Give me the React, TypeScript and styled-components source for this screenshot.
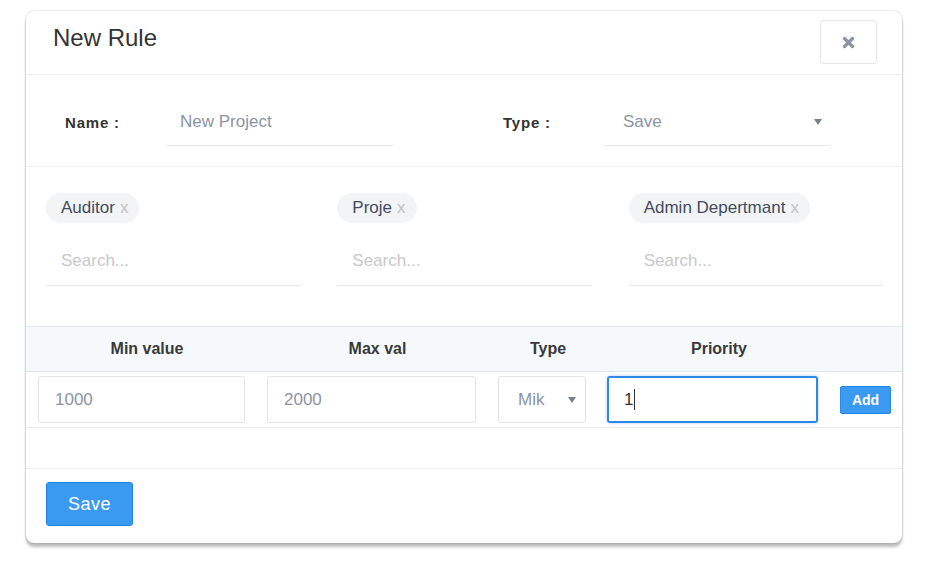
import React from 'react';
import styled, { createGlobalStyle } from 'styled-components';

const GlobalStyle = createGlobalStyle`
  html, body {
    margin: 0;
    padding: 0;
    background: #fff;
  }
  body {
    font-family: "Liberation Sans", Arial, sans-serif;
    color: #333;
  }
  * {
    box-sizing: border-box;
  }
`;

const Page = styled.div`
  padding: 11px 24px 20px 26px;
`;

const Card = styled.div`
  width: 876px;
  background: #fff;
  border-radius: 8px;
  box-shadow: 0 0 2px rgba(0, 0, 0, 0.25), 0 4px 3px rgba(0, 0, 0, 0.26);
`;

const Header = styled.div`
  display: flex;
  justify-content: space-between;
  align-items: flex-start;
  height: 64px;
  padding: 9px 25px 0 27px;
  border-bottom: 1px solid #f0f0f0;
`;

const Title = styled.h4`
  margin: 3px 0 0;
  font-size: 24px;
  line-height: 29px;
  font-weight: normal;
  color: #333;
`;

const CloseButton = styled.button`
  width: 57px;
  height: 44px;
  display: flex;
  align-items: center;
  justify-content: center;
  background: #fff;
  border: 1px solid #e6e6e6;
  border-radius: 3px;
  padding: 0;
  cursor: pointer;
`;

const FieldRow = styled.div`
  display: grid;
  grid-template-columns: 101px 227px 110px 100px 227px;
  align-items: center;
  padding: 23px 0 20px 39px;
  border-bottom: 1px solid #f0f0f0;
`;

const Label = styled.label`
  font-size: 15px;
  font-weight: bold;
  letter-spacing: 0.8px;
  color: #333;
`;

const LineInput = styled.input`
  width: 100%;
  height: 48px;
  border: none;
  border-bottom: 1px solid #e8e8e8;
  padding: 0 14px;
  font-family: "Liberation Sans", Arial, sans-serif;
  font-size: 17px;
  color: #8a94a6;
  background: transparent;
  outline: none;
`;

const LineSelect = styled.div`
  height: 48px;
  display: flex;
  align-items: center;
  justify-content: space-between;
  border-bottom: 1px solid #e8e8e8;
  padding: 0 8px 0 20px;
  font-size: 17px;
  color: #8a94a6;
`;

const TagsRow = styled.div`
  display: grid;
  grid-template-columns: repeat(3, 1fr);
  column-gap: 37px;
  padding: 26px 19px 40px 20px;
`;

const TagColumn = styled.div`
  display: flex;
  flex-direction: column;
  align-items: flex-start;
`;

const Tag = styled.span`
  display: inline-flex;
  align-items: center;
  height: 30px;
  padding: 0 11px 0 15px;
  border-radius: 15px;
  background: #f2f4f5;
  font-size: 17px;
  color: #434c63;
`;

const TagRemove = styled.span`
  margin-left: 5px;
  color: #c2c2c2;
`;

const SearchInput = styled.input`
  width: 100%;
  height: 49px;
  margin-top: 14px;
  border: none;
  border-bottom: 1px solid #e8e8e8;
  padding: 0 15px;
  font-family: "Liberation Sans", Arial, sans-serif;
  font-size: 17px;
  color: #555;
  background: transparent;
  outline: none;

  &::placeholder {
    color: #c8c8c8;
  }
`;

const columns = '230px 231px 110px 232px 73px';

const TableHead = styled.div`
  display: grid;
  grid-template-columns: ${columns};
  height: 46px;
  background: #f5f9fc;
  border-top: 1px solid #dce7ef;
  border-bottom: 1px solid #dce7ef;
`;

const HeadCell = styled.div`
  padding-left: 12px;
  text-align: center;
  font-size: 16px;
  font-weight: bold;
  line-height: 44px;
  color: #3a3a3a;
`;

const TableRow = styled.div`
  display: grid;
  grid-template-columns: ${columns};
  align-items: center;
  border-bottom: 1px solid #e9e9e9;
`;

const Cell = styled.div<{ $left?: number }>`
  padding: 4px 11px 4px ${(p) => p.$left ?? 12}px;
`;

const BoxInput = styled.input`
  width: 100%;
  height: 47px;
  border: 1px solid #e3e3e3;
  border-radius: 3px;
  padding: 0 16px;
  font-family: "Liberation Sans", Arial, sans-serif;
  font-size: 17px;
  color: #8a94a6;
  outline: none;
`;

const BoxSelect = styled.div`
  height: 47px;
  display: flex;
  align-items: center;
  justify-content: space-between;
  border: 1px solid #e3e3e3;
  border-radius: 3px;
  padding: 0 9px 0 19px;
  font-size: 17px;
  color: #8a94a6;
  white-space: nowrap;
`;

const FocusedBox = styled.div`
  height: 47px;
  display: flex;
  align-items: center;
  border: 2px solid #2f87e6;
  border-radius: 3px;
  box-shadow: 0 0 3px rgba(47, 135, 230, 0.45);
  padding: 0 15px;
  font-size: 17px;
  color: #333;
`;

const Caret = styled.span`
  display: inline-block;
  width: 1px;
  height: 21px;
  margin-left: 1px;
  background: #333;
`;

const Button = styled.button<{ $small?: boolean }>`
  width: ${(p) => (p.$small ? '51px' : '87px')};
  height: ${(p) => (p.$small ? '28px' : '44px')};
  padding: 0;
  background: #3a9af2;
  border: 1px solid ${(p) => (p.$small ? '#2389e8' : '#1c84e6')};
  border-radius: ${(p) => (p.$small ? '2px' : '3px')};
  color: #fff;
  font-family: "Liberation Sans", Arial, sans-serif;
  font-size: ${(p) => (p.$small ? '14px' : '18px')};
  font-weight: ${(p) => (p.$small ? 'bold' : 'normal')};
  letter-spacing: ${(p) => (p.$small ? '0' : '0.5px')};
  cursor: pointer;
`;

const Spacer = styled.div`
  height: 41px;
  border-bottom: 1px solid #f0f0f0;
`;

const Footer = styled.div`
  padding: 13px 20px 17px;
`;

const CloseIcon = () => (
  <svg width="13" height="13" viewBox="0 0 13 13">
    <path
      d="M2.5 2.5 L10.5 10.5 M10.5 2.5 L2.5 10.5"
      stroke="#8a93a6"
      strokeWidth="3.2"
      strokeLinecap="round"
      fill="none"
    />
  </svg>
);

const Arrow = () => (
  <svg width="8" height="6" viewBox="0 0 8 6">
    <polygon points="0,0 8,0 4,6" fill="#7a7f88" />
  </svg>
);

const tags = ['Auditor', 'Proje', 'Admin Depertmant'];

const App: React.FC = () => {
  return (
    <Page>
      <GlobalStyle />
      <Card>
        <Header>
          <Title>New Rule</Title>
          <CloseButton aria-label="Close">
            <CloseIcon />
          </CloseButton>
        </Header>

        <FieldRow>
          <Label>Name :</Label>
          <LineInput readOnly defaultValue="New Project" />
          <span />
          <Label>Type :</Label>
          <LineSelect>
            <span>Save</span>
            <Arrow />
          </LineSelect>
        </FieldRow>

        <TagsRow>
          {tags.map((tag) => (
            <TagColumn key={tag}>
              <Tag>
                {tag}
                <TagRemove>x</TagRemove>
              </Tag>
              <SearchInput placeholder="Search..." />
            </TagColumn>
          ))}
        </TagsRow>

        <TableHead>
          <HeadCell>Min value</HeadCell>
          <HeadCell>Max val</HeadCell>
          <HeadCell>Type</HeadCell>
          <HeadCell>Priority</HeadCell>
          <HeadCell />
        </TableHead>
        <TableRow>
          <Cell>
            <BoxInput readOnly defaultValue="1000" />
          </Cell>
          <Cell $left={11}>
            <BoxInput readOnly defaultValue="2000" />
          </Cell>
          <Cell $left={11}>
            <BoxSelect>
              <span>Mik</span>
              <Arrow />
            </BoxSelect>
          </Cell>
          <Cell $left={10}>
            <FocusedBox>
              1<Caret />
            </FocusedBox>
          </Cell>
          <Cell $left={11}>
            <Button $small>Add</Button>
          </Cell>
        </TableRow>
        <Spacer />

        <Footer>
          <Button>Save</Button>
        </Footer>
      </Card>
    </Page>
  );
};

export default App;
